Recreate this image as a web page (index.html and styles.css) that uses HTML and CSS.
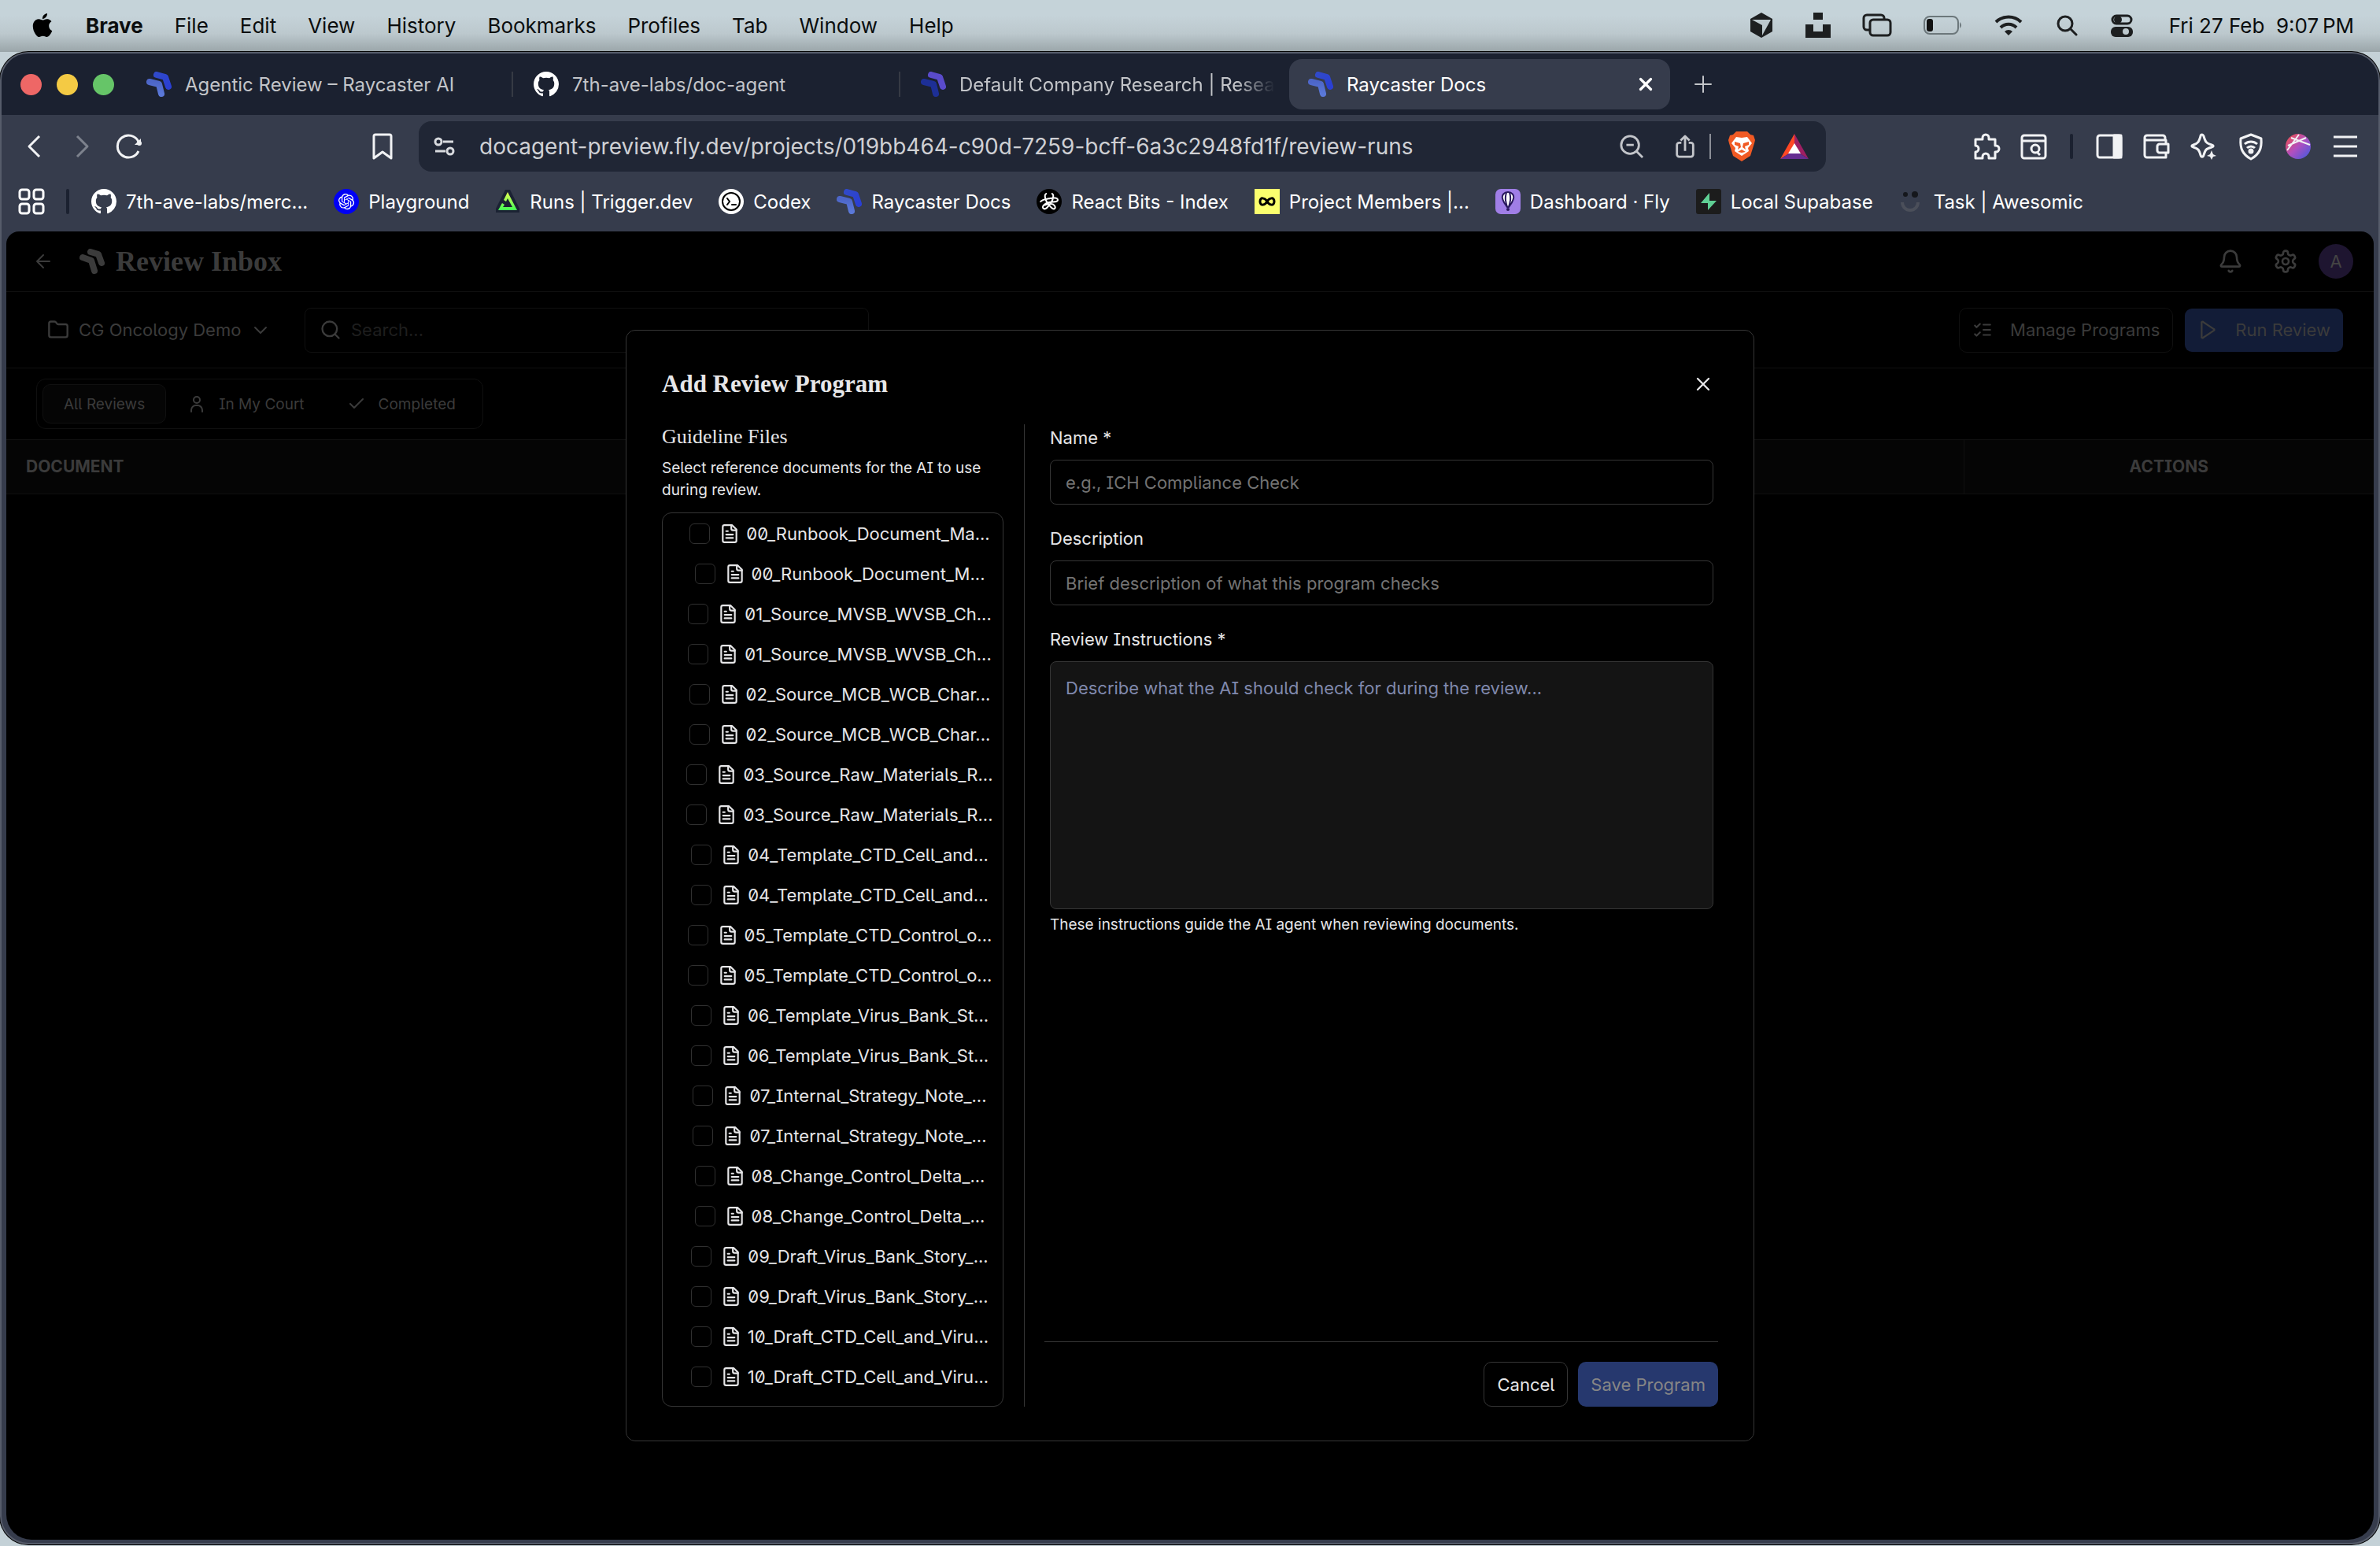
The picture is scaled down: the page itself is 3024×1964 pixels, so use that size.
FILE: index.html
```html
<!DOCTYPE html>
<html lang="en">
<head>
    <meta charset="UTF-8">
    <meta name="viewport" content="width=device-width, initial-scale=1.0">
    <title>Raycaster Docs</title>
    <link rel="stylesheet" href="styles.css">
</head>
<body>
    <!-- icon sprite -->
    <svg class="sprite" aria-hidden="true">
        <defs>
            <linearGradient id="blueBack" x1="0" y1="0" x2="1" y2="1"><stop offset="0" stop-color="#3049c9"/><stop offset="1" stop-color="#2a3fd4"/></linearGradient>
            <linearGradient id="blueFront" x1="0" y1="0" x2="0" y2="1"><stop offset="0" stop-color="#4d66c8"/><stop offset="1" stop-color="#5a78d8"/></linearGradient>
            <linearGradient id="ball" x1="0" y1="0" x2="1" y2="1"><stop offset="0.1" stop-color="#e8505b"/><stop offset="0.5" stop-color="#b04fc0"/><stop offset="1" stop-color="#3a5be0"/></linearGradient>
            <linearGradient id="lime" x1="0" y1="0" x2="0" y2="1"><stop offset="0" stop-color="#e7ff52"/><stop offset="1" stop-color="#41ff54"/></linearGradient>
        </defs>
        <symbol id="logo" viewBox="0 0 32 32"><g fill="none" stroke-width="8" stroke-linecap="round" stroke-linejoin="round"><path stroke="url(#blueBack)" d="M13 4L24 7 28 19"/><path stroke="url(#blueFront)" d="M4 13L16 16 19 28"/></g></symbol>
        <symbol id="logo-purple" viewBox="0 0 32 32"><g fill="none" stroke-width="8" stroke-linecap="round" stroke-linejoin="round"><path stroke="#5a4bcb" d="M13 4L24 7 28 19"/><path stroke="#1d2f96" d="M4 13L16 16 19 28"/></g></symbol>
        <symbol id="logo-mono" viewBox="0 0 32 32"><g fill="none" stroke="currentColor" stroke-width="8" stroke-linecap="round" stroke-linejoin="round"><path d="M14 4L24 7 28 18"/><path d="M4 11L15 15 19 28"/></g></symbol>
        <symbol id="github" viewBox="0 0 16 16"><path fill="#fff" d="M8 0C3.58 0 0 3.58 0 8c0 3.54 2.29 6.53 5.47 7.59.4.07.55-.17.55-.38 0-.19-.01-.82-.01-1.49-2.01.37-2.53-.49-2.69-.94-.09-.23-.48-.94-.82-1.13-.28-.15-.68-.52-.01-.53.63-.01 1.08.58 1.23.82.72 1.21 1.87.87 2.33.66.07-.52.28-.87.51-1.07-1.78-.2-3.64-.89-3.64-3.95 0-.87.31-1.59.82-2.15-.08-.2-.36-1.02.08-2.12 0 0 .67-.21 2.2.82.64-.18 1.32-.27 2-.27s1.36.09 2 .27c1.53-1.04 2.2-.82 2.2-.82.44 1.1.16 1.92.08 2.12.51.56.82 1.27.82 2.15 0 3.07-1.87 3.75-3.65 3.95.29.25.54.73.54 1.48 0 1.07-.01 1.93-.01 2.2 0 .21.15.46.55.38A8.01 8.01 0 0 0 16 8c0-4.42-3.58-8-8-8z"/></symbol>
        <symbol id="file" viewBox="0 0 24 24"><path d="M15 2H6a2 2 0 0 0-2 2v16a2 2 0 0 0 2 2h12a2 2 0 0 0 2-2V7Z"/><path d="M14 2v4a2 2 0 0 0 2 2h4"/><path d="M10 9H8"/><path d="M16 13H8"/><path d="M16 17H8"/></symbol>
        <symbol id="x" viewBox="0 0 24 24"><path d="M18 6 6 18"/><path d="m6 6 12 12"/></symbol>
        <symbol id="search" viewBox="0 0 24 24"><circle cx="11" cy="11" r="8"/><path d="m21 21-4.3-4.3"/></symbol>
    </svg>

    <header class="menubar">
        <svg class="apple" viewBox="0 0 24 24"><path d="M12.152 6.896c-.948 0-2.415-1.078-3.96-1.04-2.04.027-3.91 1.183-4.961 3.014-2.117 3.675-.546 9.103 1.519 12.09 1.013 1.454 2.208 3.09 3.792 3.039 1.52-.065 2.09-.987 3.935-.987 1.831 0 2.35.987 3.96.948 1.637-.026 2.676-1.48 3.676-2.948 1.156-1.688 1.636-3.325 1.662-3.415-.039-.013-3.182-1.221-3.22-4.857-.026-3.04 2.48-4.494 2.597-4.559-1.429-2.09-3.623-2.324-4.39-2.376-2-.156-3.675 1.09-4.61 1.09zM15.53 3.83c.843-1.012 1.4-2.427 1.245-3.83-1.207.052-2.662.805-3.532 1.818-.78.896-1.454 2.338-1.273 3.714 1.338.104 2.715-.688 3.559-1.701"/></svg>
        <nav class="menus">
            <strong>Brave</strong>
            <span>File</span>
            <span>Edit</span>
            <span>View</span>
            <span>History</span>
            <span>Bookmarks</span>
            <span>Profiles</span>
            <span>Tab</span>
            <span>Window</span>
            <span>Help</span>
        </nav>
        <div class="status">
            <svg width="32" height="32" viewBox="0 0 32 32"><path fill="#1d1f20" d="M16 0L30 8v16L16 32 2 24V8z"/><path fill="#bcc8cd" d="M4 9h24L17 29V16z"/></svg>
            <svg width="32" height="32" viewBox="0 0 32 32"><path fill="#1d1f20" d="M10 0h12v9H10zM0 15h10v9h12v-9h10v17H0z"/></svg>
            <svg width="38" height="32" viewBox="0 0 38 32" fill="none" stroke="#1d1f20" stroke-width="3"><path d="M10 22H6a4 4 0 0 1-4-4V7a4 4 0 0 1 4-4h18a4 4 0 0 1 4 4v2"/><rect x="10" y="9" width="26" height="20" rx="4"/></svg>
            <svg width="50" height="26" viewBox="0 0 50 26"><rect x="1" y="2" width="43" height="22" rx="7" fill="none" stroke="#6c777b" stroke-width="2"/><path d="M46 9q4 4 0 8z" fill="#6c777b"/><rect x="4" y="5" width="8" height="16" rx="3" fill="#111"/></svg>
            <svg width="36" height="28" viewBox="0 0 36 28" fill="none" stroke="#1d1f20" stroke-width="4"><path d="M2 10a23 23 0 0 1 32 0"/><path d="M8 17a14 14 0 0 1 20 0"/><path d="M18 27l-5-5a7 7 0 0 1 10 0z" fill="#1d1f20" stroke="none"/></svg>
            <svg width="32" height="28" viewBox="0 0 28 28" fill="none" stroke="#1d1f20" stroke-width="3" stroke-linecap="round"><circle cx="12" cy="12" r="9"/><path d="M19 19l7 7"/></svg>
            <svg width="28" height="30" viewBox="0 0 28 30"><rect x="2" y="3" width="24" height="10" rx="5" fill="none" stroke="#1d1f20" stroke-width="3"/><circle cx="9" cy="8" r="5" fill="#1d1f20"/><rect x="0" y="17" width="28" height="13" rx="6" fill="#1d1f20"/><circle cx="19" cy="23" r="4" fill="#bcc8cd"/></svg>
            <time>Fri 27 Feb&nbsp; 9:07&#8201;PM</time>
        </div>
    </header>

    <div class="window">
        <div class="tabstrip">
            <div class="lights"><i class="light red"></i><i class="light yellow"></i><i class="light green"></i></div>
            <div class="tab"><svg class="fav"><use href="#logo"/></svg><span class="tab-title">Agentic Review – Raycaster AI</span><i class="tab-sep"></i></div>
            <div class="tab"><svg class="fav"><use href="#github"/></svg><span class="tab-title">7th-ave-labs/doc-agent</span><i class="tab-sep"></i></div>
            <div class="tab"><svg class="fav"><use href="#logo-purple"/></svg><span class="tab-title fade">Default Company Research | Resea</span></div>
            <div class="tab active"><svg class="fav"><use href="#logo"/></svg><span class="tab-title">Raycaster Docs</span><button class="tab-close" aria-label="Close tab"><svg class="line bold" width="26" height="26"><use href="#x"/></svg></button></div>
            <button class="tab-new" aria-label="New tab"><svg class="line" width="24" height="24" viewBox="0 0 24 24"><path d="M12 2v20M2 12h20"/></svg></button>
        </div>

        <div class="toolbar">
            <div class="tools-left">
                <button class="tool" aria-label="Back"><svg viewBox="0 0 32 32"><path d="M22 3L9 16l13 13"/></svg></button>
                <button class="tool off" aria-label="Forward"><svg viewBox="0 0 32 32"><path d="M10 3l13 13-13 13"/></svg></button>
                <button class="tool" aria-label="Reload"><svg viewBox="0 0 32 32"><path d="M28 22A14 14 0 1 1 28 10"/><circle cx="29" cy="12" r="3" fill="currentColor" stroke="none"/><path d="M31 6v8h-8z" fill="currentColor" stroke="none"/></svg></button>
                <button class="tool push" aria-label="Bookmark this page"><svg viewBox="0 0 32 32"><path d="M5 3a2 2 0 0 1 2-2h18a2 2 0 0 1 2 2v28l-11-8-11 8z"/></svg></button>
            </div>
            <div class="urlbar">
                <svg class="site" viewBox="0 0 28 24"><circle cx="6" cy="6" r="4"/><path d="M12 6h13M2 18h13"/><circle cx="21" cy="18" r="4"/></svg>
                <input class="url" type="text" aria-label="Address" value="docagent-preview.fly.dev/projects/019bb464-c90d-7259-bcff-6a3c2948fd1f/review-runs">
                <button class="tool soft" aria-label="Zoom"><svg viewBox="0 0 32 32"><circle cx="14" cy="14" r="12"/><path d="M23 23l8 8M9 14h10"/></svg></button>
                <button class="tool soft share" aria-label="Share"><svg viewBox="0 0 32 32"><path d="M11 11H8a3 3 0 0 0-3 3v13a3 3 0 0 0 3 3h16a3 3 0 0 0 3-3V14a3 3 0 0 0-3-3h-3M16 22V2M10 8l6-6 6 6"/></svg></button>
                <i class="url-sep"></i>
                <svg width="34" height="38" viewBox="0 0 34 38"><path fill="#f15a24" d="M10 0h14l4 4 4 1 2 6-1 4-5 16-11 7-11-7L1 15l-1-4 2-6 4-1z"/><path fill="#fff" d="M10 7l7 1 7-1 6 8-5 6 1 4-9 6-9-6 1-4-5-6z"/><path fill="#f15a24" d="M8 13l7 2 1 5-4 3 1-4-5-2zM26 13l-7 2-1 5 4 3-1-4 5-2zM12 26l5-3 5 3-5 1z"/></svg>
                <svg class="bat" width="36" height="32" viewBox="0 0 36 32"><path fill="#ff4724" d="M18 0L0 32l11-7 7-12z"/><path fill="#9e1f63" d="M18 0l18 32-11-7-7-12z"/><path fill="#662d91" d="M0 32h36l-11-7H11z"/><path fill="#fff" d="M18 12l8 13H10z"/></svg>
            </div>
            <div class="tools-right">
                <button class="tool" aria-label="Extensions"><svg viewBox="0 0 32 32"><path d="M2 7h9V5a4 4 0 0 1 8 0v2h8v8h1a4 4 0 0 1 0 8h-1v8h-8v-2a4 4 0 0 0-8 0v2H2v-8a4 4 0 0 0 0-8z"/></svg></button>
                <button class="tool" aria-label="Find in page"><svg viewBox="0 0 32 32"><rect x="1" y="2" width="30" height="29" rx="3"/><path d="M1 9h30M21 24l3 3"/><circle cx="18" cy="19" r="5"/></svg></button>
                <i class="tool-sep"></i>
                <button class="tool" aria-label="Sidebar"><svg viewBox="0 0 32 32"><rect x="1" y="2" width="30" height="28" rx="3"/><path d="M22 2h9v28h-9z" fill="currentColor"/></svg></button>
                <button class="tool" aria-label="Wallet"><svg viewBox="0 0 32 32"><path d="M28 13V8H4a3 3 0 0 1-3-3 3 3 0 0 1 3-3h20a3 3 0 0 1 3 3v3M1 5v22a3 3 0 0 0 3 3h24V24"/><path d="M31 13H20a3 3 0 0 0-3 3v5a3 3 0 0 0 3 3h11z"/></svg></button>
                <button class="tool" aria-label="Leo AI"><svg viewBox="0 0 32 32"><path d="M14 1c1 0 1 0 2 2 2 7 3 9 10 11 3 1 3 2 0 3-7 2-8 3-10 10-1 3-3 3-4 0-2-7-3-8-9-10-3-1-3-2 0-3 6-2 7-4 9-11 0-2 1-2 2-2z"/><path d="M26 21l2 5 4 2-4 1-2 4-2-4-4-1 4-2z" fill="currentColor" stroke="none"/></svg></button>
                <button class="tool" aria-label="VPN"><svg viewBox="0 0 32 32"><path d="M16 1l13 5c1 12-2 20-13 26C5 26 2 18 3 6z"/><path d="M8 13a12 12 0 0 1 16 0M11 18a7 7 0 0 1 10 0"/><circle cx="16" cy="22" r="2" fill="currentColor"/></svg></button>
                <button class="tool" aria-label="Profile"><svg viewBox="0 0 32 32"><circle cx="16" cy="16" r="16" fill="url(#ball)" stroke="none"/><path d="M2 21L17 1M7 5l24 9M3 15L26 5" stroke-width="2"/></svg></button>
                <button class="tool" aria-label="Menu"><svg viewBox="0 0 32 32"><path d="M1 4h30M1 16h30M1 28h30"/></svg></button>
            </div>
        </div>

        <nav class="bookmarks">
            <button class="tool" aria-label="All bookmarks"><svg viewBox="0 0 32 32"><rect x="1" y="1" width="12" height="12" rx="3"/><rect x="19" y="1" width="12" height="12" rx="3"/><rect x="1" y="19" width="12" height="12" rx="3"/><rect x="19" y="19" width="12" height="12" rx="3"/></svg></button>
            <i class="tool-sep"></i>
            <a href="#"><svg class="fav"><use href="#github"/></svg>7th-ave-labs/merc...</a>
            <a href="#"><svg class="fav" viewBox="0 0 32 32"><circle cx="16" cy="16" r="16" fill="#0000f5"/><path transform="translate(6 6) scale(.84)" fill="#fff" d="M22.2819 9.8211a5.9847 5.9847 0 0 0-.5157-4.9108 6.0462 6.0462 0 0 0-6.5098-2.9A6.0651 6.0651 0 0 0 4.9807 4.1818a5.9847 5.9847 0 0 0-3.9977 2.9 6.0462 6.0462 0 0 0 .7427 7.0966 5.98 5.98 0 0 0 .511 4.9107 6.051 6.051 0 0 0 6.5146 2.9001A5.9847 5.9847 0 0 0 13.2599 24a6.0557 6.0557 0 0 0 5.7718-4.2058 5.9894 5.9894 0 0 0 3.9977-2.9001 6.0557 6.0557 0 0 0-.7475-7.0729zm-9.022 12.6081a4.4755 4.4755 0 0 1-2.8764-1.0408l.1419-.0804 4.7783-2.7582a.7948.7948 0 0 0 .3927-.6813v-6.7369l2.02 1.1686a.071.071 0 0 1 .038.052v5.5826a4.504 4.504 0 0 1-4.4945 4.4944zm-9.6607-4.1254a4.4708 4.4708 0 0 1-.5346-3.0137l.142.0852 4.783 2.7582a.7712.7712 0 0 0 .7806 0l5.8428-3.3685v2.3324a.0804.0804 0 0 1-.0332.0615L9.74 19.9502a4.4992 4.4992 0 0 1-6.1408-1.6464zM2.3408 7.8956a4.485 4.485 0 0 1 2.3655-1.9728V11.6a.7664.7664 0 0 0 .3879.6765l5.8144 3.3543-2.0201 1.1685a.0757.0757 0 0 1-.071 0l-4.8303-2.7865A4.504 4.504 0 0 1 2.3408 7.872zm16.5963 3.8558L13.1038 8.364 15.1192 7.2a.0757.0757 0 0 1 .071 0l4.8303 2.7913a4.4944 4.4944 0 0 1-.6765 8.1042v-5.6772a.79.79 0 0 0-.407-.667zm2.0107-3.0231l-.142-.0852-4.7735-2.7818a.7759.7759 0 0 0-.7854 0L9.409 9.2297V6.8974a.0662.0662 0 0 1 .0284-.0615l4.8303-2.7866a4.4992 4.4992 0 0 1 6.6802 4.66zM8.3065 12.863l-2.02-1.1638a.0804.0804 0 0 1-.038-.0567V6.0742a4.4992 4.4992 0 0 1 7.3757-3.4537l-.142.0805L8.704 5.459a.7948.7948 0 0 0-.3927.6813zm1.0976-2.3654l2.602-1.4998 2.6069 1.4998v2.9994l-2.5974 1.4997-2.6067-1.4997Z"/></svg>Playground</a>
            <a href="#"><svg class="fav" viewBox="0 0 32 32"><path fill="#1b2233" d="M13 1h6l12 24v5H1v-5z"/><path fill="url(#lime)" d="M16 4l12 23H4l5-9 3 2-2 3h12l-6-11-2 4-3-2z"/></svg>Runs | Trigger.dev</a>
            <a href="#"><svg class="fav" viewBox="0 0 32 32"><circle cx="16" cy="16" r="16" fill="#fff"/><g fill="none" stroke="#000" stroke-width="2" stroke-linecap="round"><circle cx="16" cy="16" r="11"/><path d="M11 12l3 4-3 4M17 20h5"/></g></svg>Codex</a>
            <a href="#"><svg class="fav"><use href="#logo"/></svg>Raycaster Docs</a>
            <a href="#"><svg class="fav" viewBox="0 0 32 32"><circle cx="16" cy="16" r="16" fill="#000"/><g fill="none" stroke="#fff" stroke-width="2"><path d="M13 6c-4 0-2 8 1 12s7 9 9 7-1-6-4-6-6 0-9 2M19 6c4 0 2 8-1 12s-6 9-9 7 1-7 7-8 11 0 11-3-5-3-10-2S5 14 5 17"/></g></svg>React Bits - Index</a>
            <a href="#"><svg class="fav" viewBox="0 0 32 32"><path fill="#fbff6e" d="M0 0h32v32H0z"/><path fill="none" stroke="#000" stroke-width="3" d="M16 16c-3-5-9-6-9 0s6 5 9 0 9-6 9 0-6 5-9 0z"/></svg>Project Members |...</a>
            <a href="#"><svg class="fav" viewBox="0 0 32 32"><rect width="32" height="32" rx="7" fill="#a07ee6"/><path fill="#fff" stroke="#2b1a5e" stroke-width="2" d="M16 4c-5 0-8 4-7 8 1 5 4 8 6 11h2c2-3 5-6 6-11 1-4-2-8-7-8z"/><path fill="none" stroke="#2b1a5e" stroke-width="2" d="M14 5c-2 5-1 12 1 18M18 5c2 5 1 12-1 18"/><circle cx="16" cy="26" r="2" fill="#2b1a5e"/></svg>Dashboard · Fly</a>
            <a href="#"><svg class="fav" viewBox="0 0 32 32"><rect width="32" height="32" rx="3" fill="#1c1c1c"/><path fill="#5fcf94" d="M17 5v10h9L15 27V18H6z"/></svg>Local Supabase</a>
            <a href="#"><svg class="fav" viewBox="0 0 32 32"><circle cx="8" cy="7" r="3" fill="#15171c"/><circle cx="20" cy="7" r="4" fill="#15171c"/><path d="M4 17a10 10 0 0 0 20 0" fill="none" stroke="#4b4f5a" stroke-width="4"/></svg>Task | Awesomic</a>
        </nav>

        <main class="page">
            <header class="page-header">
                <button class="icon-btn" aria-label="Go back"><svg class="line" width="24" height="24" viewBox="0 0 24 24"><path d="M20 12H4M12 4l-8 8 8 8"/></svg></button>
                <svg class="fav brand"><use href="#logo-mono"/></svg>
                <h1>Review Inbox</h1>
                <div class="header-actions">
                    <button class="icon-btn" aria-label="Notifications"><svg class="line" width="32" height="32" viewBox="0 0 24 24"><path d="M10.3 21a1.94 1.94 0 0 0 3.4 0"/><path d="M4 17h16c1 0 1.500-1 .8-1.800C19.400 13.800 18 12.500 18 8A6 6 0 0 0 6 8c0 4.500-1.400 5.800-2.800 7.200C2.500 16 3 17 4 17z"/></svg></button>
                    <button class="icon-btn" aria-label="Settings"><svg class="line" width="32" height="32" viewBox="0 0 24 24"><path d="M12.22 2h-.44a2 2 0 0 0-2 2v.18a2 2 0 0 1-1 1.73l-.43.25a2 2 0 0 1-2 0l-.15-.08a2 2 0 0 0-2.73.73l-.22.38a2 2 0 0 0 .73 2.73l.15.1a2 2 0 0 1 1 1.72v.51a2 2 0 0 1-1 1.74l-.15.09a2 2 0 0 0-.73 2.73l.22.38a2 2 0 0 0 2.73.73l.15-.08a2 2 0 0 1 2 0l.43.25a2 2 0 0 1 1 1.73V20a2 2 0 0 0 2 2h.44a2 2 0 0 0 2-2v-.18a2 2 0 0 1 1-1.73l.43-.25a2 2 0 0 1 2 0l.15.08a2 2 0 0 0 2.73-.73l.22-.39a2 2 0 0 0-.73-2.73l-.15-.08a2 2 0 0 1-1-1.74v-.5a2 2 0 0 1 1-1.74l.15-.09a2 2 0 0 0 .73-2.73l-.22-.38a2 2 0 0 0-2.73-.73l-.15.08a2 2 0 0 1-2 0l-.43-.25a2 2 0 0 1-1-1.73V4a2 2 0 0 0-2-2z"/><circle cx="12" cy="12" r="3"/></svg></button>
                    <button class="avatar">A</button>
                </div>
            </header>

            <div class="filters">
                <label class="project">
                    <svg class="line" width="28" height="28" viewBox="0 0 24 24"><path d="M20 20a2 2 0 0 0 2-2V8a2 2 0 0 0-2-2h-7.900a2 2 0 0 1-1.690-.900L9.600 3.900A2 2 0 0 0 7.930 3H4a2 2 0 0 0-2 2v13a2 2 0 0 0 2 2Z"/></svg>
                    <select aria-label="Project"><option>CG Oncology Demo</option></select>
                    <svg class="line" width="24" height="24" viewBox="0 0 24 24"><path d="m5 9 7 7 7-7"/></svg>
                </label>
                <label class="search">
                    <svg class="line" width="28" height="28"><use href="#search"/></svg>
                    <input type="text" placeholder="Search..." aria-label="Search">
                </label>
                <div class="filter-actions">
                    <button class="btn btn-ghost"><svg class="line" width="26" height="26" viewBox="0 0 24 24"><path d="m3 17 2 2 4-4"/><path d="m3 7 2 2 4-4"/><path d="M13 6h8"/><path d="M13 12h8"/><path d="M13 18h8"/></svg>Manage Programs</button>
                    <button class="btn btn-run"><svg class="line" width="26" height="26" viewBox="0 0 24 24"><path d="M5 4v16a1 1 0 0 0 2 1l12-8a1 1 0 0 0 0-2L7 3a1 1 0 0 0-2 1z"/></svg>Run Review</button>
                </div>
            </div>

            <div class="views">
                <div class="segmented">
                    <button class="segment current">All Reviews</button>
                    <button class="segment"><svg class="line" width="24" height="24" viewBox="0 0 24 24"><circle cx="12" cy="7" r="4"/><path d="M5 22v-2a6 6 0 0 1 6-6h2a6 6 0 0 1 6 6v2"/></svg>In My Court</button>
                    <button class="segment"><svg class="line" width="24" height="24" viewBox="0 0 24 24"><path d="M20 6 9 17l-5-5"/></svg>Completed</button>
                </div>
            </div>

            <table class="reviews">
                <thead><tr><th>Document</th><th class="col-actions">Actions</th></tr></thead>
            </table>

            <div class="overlay">
                <section class="modal" role="dialog" aria-labelledby="modalTitle">
                    <div class="modal-head">
                        <h2 id="modalTitle">Add Review Program</h2>
                        <button class="modal-close" aria-label="Close"><svg class="line" width="28" height="28"><use href="#x"/></svg></button>
                    </div>
                    <div class="modal-body">
                        <div class="guidelines">
                            <h3>Guideline Files</h3>
                            <p class="hint">Select reference documents for the AI to use during review.</p>
                            <div class="files">
                                <label class="file"><input type="checkbox"><svg class="line"><use href="#file"/></svg>00_Runbook_Document_Ma...</label>
                                <label class="file"><input type="checkbox"><svg class="line"><use href="#file"/></svg>00_Runbook_Document_M...</label>
                                <label class="file"><input type="checkbox"><svg class="line"><use href="#file"/></svg>01_Source_MVSB_WVSB_Ch...</label>
                                <label class="file"><input type="checkbox"><svg class="line"><use href="#file"/></svg>01_Source_MVSB_WVSB_Ch...</label>
                                <label class="file"><input type="checkbox"><svg class="line"><use href="#file"/></svg>02_Source_MCB_WCB_Char...</label>
                                <label class="file"><input type="checkbox"><svg class="line"><use href="#file"/></svg>02_Source_MCB_WCB_Char...</label>
                                <label class="file"><input type="checkbox"><svg class="line"><use href="#file"/></svg>03_Source_Raw_Materials_R...</label>
                                <label class="file"><input type="checkbox"><svg class="line"><use href="#file"/></svg>03_Source_Raw_Materials_R...</label>
                                <label class="file"><input type="checkbox"><svg class="line"><use href="#file"/></svg>04_Template_CTD_Cell_and...</label>
                                <label class="file"><input type="checkbox"><svg class="line"><use href="#file"/></svg>04_Template_CTD_Cell_and...</label>
                                <label class="file"><input type="checkbox"><svg class="line"><use href="#file"/></svg>05_Template_CTD_Control_o...</label>
                                <label class="file"><input type="checkbox"><svg class="line"><use href="#file"/></svg>05_Template_CTD_Control_o...</label>
                                <label class="file"><input type="checkbox"><svg class="line"><use href="#file"/></svg>06_Template_Virus_Bank_St...</label>
                                <label class="file"><input type="checkbox"><svg class="line"><use href="#file"/></svg>06_Template_Virus_Bank_St...</label>
                                <label class="file"><input type="checkbox"><svg class="line"><use href="#file"/></svg>07_Internal_Strategy_Note_...</label>
                                <label class="file"><input type="checkbox"><svg class="line"><use href="#file"/></svg>07_Internal_Strategy_Note_...</label>
                                <label class="file"><input type="checkbox"><svg class="line"><use href="#file"/></svg>08_Change_Control_Delta_...</label>
                                <label class="file"><input type="checkbox"><svg class="line"><use href="#file"/></svg>08_Change_Control_Delta_...</label>
                                <label class="file"><input type="checkbox"><svg class="line"><use href="#file"/></svg>09_Draft_Virus_Bank_Story_...</label>
                                <label class="file"><input type="checkbox"><svg class="line"><use href="#file"/></svg>09_Draft_Virus_Bank_Story_...</label>
                                <label class="file"><input type="checkbox"><svg class="line"><use href="#file"/></svg>10_Draft_CTD_Cell_and_Viru...</label>
                                <label class="file"><input type="checkbox"><svg class="line"><use href="#file"/></svg>10_Draft_CTD_Cell_and_Viru...</label>
                            </div>
                        </div>
                        <form class="program">
                            <div class="fields">
                                <div class="field">
                                    <label for="name">Name *</label>
                                    <input id="name" type="text" placeholder="e.g., ICH Compliance Check">
                                </div>
                                <div class="field">
                                    <label for="description">Description</label>
                                    <input id="description" type="text" placeholder="Brief description of what this program checks">
                                </div>
                                <div class="field">
                                    <label for="instructions">Review Instructions *</label>
                                    <textarea id="instructions" placeholder="Describe what the AI should check for during the review..."></textarea>
                                    <p class="hint">These instructions guide the AI agent when reviewing documents.</p>
                                </div>
                            </div>
                            <div class="modal-foot">
                                <button type="button" class="btn btn-cancel">Cancel</button>
                                <button type="submit" class="btn btn-save" disabled>Save Program</button>
                            </div>
                        </form>
                    </div>
                </section>
            </div>
        </main>
    </div>
</body>
</html>
```
FILE: styles.css
```css
* {
    margin: 0;
    padding: 0;
    box-sizing: border-box;
}

body {
    height: 100vh;
    display: flex;
    flex-direction: column;
    font-family: Inter, 'Liberation Sans', sans-serif;
    font-size: 24px;
    background: #c4d1d7;
    overflow: hidden;
}

button,
input,
select,
textarea {
    font: inherit;
    font-feature-settings: inherit;
    color: inherit;
    background: none;
    border: none;
    outline: none;
}

.sprite {
    position: absolute;
    width: 0;
    height: 0;
}

.line {
    fill: none;
    stroke: currentColor;
    stroke-width: 2;
    stroke-linecap: round;
    stroke-linejoin: round;
    flex-shrink: 0;
}

.line.bold {
    stroke-width: 3;
}

.fav {
    width: 32px;
    height: 32px;
    flex-shrink: 0;
}

/* system menu bar */
.menubar {
    height: 66px;
    flex-shrink: 0;
    display: flex;
    align-items: center;
    padding: 0 33px 2px 39px;
    font-size: 26px;
    color: #0b0d0e;
    background: linear-gradient(#c5d3d9 30%, #bcc8cd 65%, #9aa5a9);
}

.apple {
    width: 30px;
    height: 30px;
}

.menus {
    display: flex;
    gap: 40px;
    margin-left: 40px;
}

.status {
    display: flex;
    align-items: center;
    gap: 40px;
    margin-left: auto;
}

.status time {
    margin-left: 6px;
}

/* browser window */
.window {
    flex: 1;
    min-height: 0;
    display: flex;
    flex-direction: column;
    margin-bottom: 2px;
    border: 2px solid #565c6a;
    border-radius: 36px;
    background: #363c4c;
    box-shadow: 0 0 0 1px #000;
    overflow: hidden;
}

.tabstrip {
    height: 78px;
    display: flex;
    align-items: center;
    padding: 0 24px;
    background: #1b2130;
    color: #c3c5c9;
}

.lights {
    display: flex;
    gap: 19px;
    width: 136px;
}

.light {
    width: 27px;
    height: 27px;
    border-radius: 50%;
}

.red { background: #ee6766; }
.yellow { background: #f4ca44; }
.green { background: #66c568; }

.tab {
    flex: 0 1 492px;
    min-width: 0;
    height: 64px;
    display: flex;
    align-items: center;
    gap: 17px;
    padding: 0 2px 0 24px;
}

.tab-title {
    white-space: nowrap;
}

.tab-title.fade {
    mask-image: linear-gradient(90deg, #000 88%, transparent);
}

.tab-sep {
    width: 2px;
    height: 32px;
    margin-left: auto;
    background: #363a44;
}

.tab.active {
    flex-basis: 484px;
    border-radius: 16px;
    padding-right: 18px;
    background: #363c4c;
    color: #fff;
}

.tab-close {
    margin-left: auto;
    height: 26px;
}

.tab-new {
    margin-left: 30px;
    height: 24px;
}

.toolbar {
    height: 80px;
    display: grid;
    grid-template-columns: 530px 1fr 702px;
    align-items: center;
    color: #f1f2f4;
}

.tools-left,
.tools-right {
    display: flex;
    align-items: center;
    gap: 28px;
}

.tools-left {
    padding: 0 30px 0 26px;
}

.tools-right {
    justify-content: flex-end;
    padding-right: 26px;
}

.push {
    margin-left: auto;
}

.tool {
    width: 32px;
    height: 32px;
    flex-shrink: 0;
}

.tool svg {
    display: block;
    width: 32px;
    height: 32px;
    overflow: visible;
    fill: none;
    stroke: currentColor;
    stroke-width: 3;
    stroke-linejoin: round;
}

.tool.off {
    color: #7d828d;
}

.tool.soft {
    color: #c3c5ca;
}

.tool.soft svg {
    width: 30px;
    height: 30px;
}

.tool-sep {
    width: 4px;
    height: 32px;
    margin: 0 2px;
    border-radius: 2px;
    background: #1b2130;
}

.urlbar {
    height: 64px;
    display: flex;
    align-items: center;
    padding: 0 22px 0 19px;
    border-radius: 16px;
    background: #202635;
}

.site {
    width: 28px;
    height: 24px;
    fill: none;
    stroke: #d8dade;
    stroke-width: 3;
}

.url {
    flex: 1;
    min-width: 0;
    margin-left: 30px;
    font-size: 28px;
    color: #cfd0d4;
}

.share {
    margin-left: 36px;
}

.url-sep {
    width: 2px;
    height: 32px;
    margin: 0 22px 0 14px;
    background: #8c8f97;
}

.bat {
    margin-left: 32px;
}

.bookmarks {
    height: 68px;
    display: flex;
    align-items: center;
    gap: 33px;
    padding: 0 22px 8px;
    color: #fff;
}

.bookmarks .tool-sep {
    margin: 0 -5px;
}

.bookmarks a {
    display: flex;
    align-items: center;
    gap: 12px;
    color: inherit;
    text-decoration: none;
    white-space: nowrap;
}

/* page */
.page {
    flex: 1;
    min-height: 0;
    position: relative;
    margin: 0 6px 4px;
    border-radius: 16px 16px 32px 32px;
    background: #000;
    color: #3b3b3b;
    font-size: 22px;
    font-feature-settings: "zero", "cv05", "cv08";
    overflow: hidden;
}

.page-header {
    height: 77px;
    display: flex;
    align-items: center;
    padding: 0 26px 0 35px;
    border-bottom: 1px solid #101010;
}

.icon-btn {
    display: flex;
}

.brand {
    margin-left: 34px;
}

.page-header h1 {
    margin-left: 14px;
    font-family: 'Liberation Serif', serif;
    font-size: 36px;
    font-weight: 700;
}

.header-actions {
    display: flex;
    align-items: center;
    gap: 38px;
    margin-left: auto;
}

.avatar {
    width: 44px;
    height: 44px;
    margin-left: -12px;
    border-radius: 50%;
    background: #1e1530;
    color: #444;
}

.filters {
    height: 97px;
    display: flex;
    align-items: center;
    padding: 0 38px 0 52px;
    border-bottom: 1px solid #101010;
}

.project {
    display: flex;
    align-items: center;
    gap: 12px;
}

.project select {
    appearance: none;
}

.search {
    width: 717px;
    height: 57px;
    display: flex;
    align-items: center;
    gap: 12px;
    margin-left: 44px;
    padding: 0 18px;
    border: 1px solid #101010;
    border-radius: 8px;
}

.search input::placeholder {
    color: #1e1e1e;
}

.filter-actions {
    display: flex;
    gap: 14px;
    margin-left: auto;
}

.btn {
    display: flex;
    align-items: center;
    height: 57px;
    padding: 0 16px;
    border: 1px solid #363636;
    border-radius: 10px;
}

.btn-ghost,
.btn-run {
    gap: 22px;
    border-color: #101010;
}

.btn-run {
    border-color: transparent;
    background: #121c37;
    background-clip: padding-box;
}

.views {
    height: 91px;
    display: flex;
    align-items: center;
    padding: 0 38px;
    border-bottom: 1px solid #101010;
}

.segmented {
    display: flex;
    padding: 6px 7px;
    border: 1px solid #101010;
    border-radius: 12px;
}

.segment {
    display: flex;
    align-items: center;
    gap: 16px;
    height: 50px;
    padding: 0 26px;
    border: 1px solid transparent;
    border-radius: 10px;
    font-size: 19px;
}

.segment.current {
    border-color: #101010;
    background: #050505;
}

.reviews {
    width: 100%;
    border-collapse: collapse;
}

.reviews th {
    height: 68px;
    padding-left: 25px;
    border-bottom: 1px solid #101010;
    background: #050505;
    font-size: 21px;
    text-align: left;
    text-transform: uppercase;
}

.reviews .col-actions {
    width: 521px;
    padding: 0;
    border-left: 1px solid #101010;
    text-align: center;
}

/* add program dialog */
.overlay {
    position: absolute;
    inset: 0;
    display: flex;
    align-items: center;
    justify-content: center;
}

.modal {
    width: 1434px;
    max-width: 100%;
    padding: 45px 45px 43px;
    border: 1px solid #363636;
    border-radius: 12px;
    background: #000;
    color: #e6e6e8;
}

.modal-head {
    display: flex;
    align-items: center;
    justify-content: space-between;
    height: 46px;
    margin-bottom: 28px;
    padding-right: 5px;
}

.modal h2,
.modal h3 {
    font-family: 'Liberation Serif', serif;
}

.modal h2 {
    font-size: 31px;
}

.modal h3 {
    font-size: 26px;
    line-height: 32px;
    font-weight: 400;
}

.modal-close {
    display: flex;
}

.modal-body {
    display: flex;
}

.guidelines {
    width: 461px;
    padding-right: 26px;
    border-right: 1px solid #363636;
}

.hint {
    font-size: 19px;
    line-height: 28px;
}

.guidelines .hint {
    margin: 10px 0 14px;
}

.files {
    padding-bottom: 12px;
    border: 1px solid #363636;
    border-radius: 12px;
    overflow: hidden;
}

.file {
    display: flex;
    align-items: center;
    justify-content: center;
    height: 51px;
    padding-left: 18px;
    white-space: nowrap;
}

.file input {
    appearance: none;
    width: 26px;
    height: 26px;
    margin-right: 12px;
    border: 1px solid #303030;
    border-radius: 6px;
}

.file svg {
    width: 26px;
    height: 26px;
    margin-right: 8px;
}

.program {
    flex: 1;
    display: flex;
    flex-direction: column;
    padding-left: 25px;
}

.fields {
    flex: 1;
    display: flex;
    flex-direction: column;
    gap: 26px;
    padding: 0 6px 0 7px;
}

.field label {
    display: block;
    line-height: 34px;
    margin-bottom: 11px;
}

.field input,
.field textarea {
    display: block;
    width: 100%;
    border: 1px solid #363636;
    border-radius: 8px;
    padding: 0 19px;
}

.field input {
    height: 57px;
}

.field textarea {
    height: 315px;
    padding: 16px 19px;
    line-height: 34px;
    background: #141414;
    resize: none;
}

.field input::placeholder {
    color: #737373;
}

.field textarea::placeholder {
    color: #8089ad;
}

.field .hint {
    margin-top: 6px;
}

.modal-foot {
    display: flex;
    justify-content: flex-end;
    gap: 13px;
    padding-top: 25px;
    border-top: 1px solid #363636;
}

.btn-save {
    border: none;
    background: #26386e;
    color: #868686;
}
```
